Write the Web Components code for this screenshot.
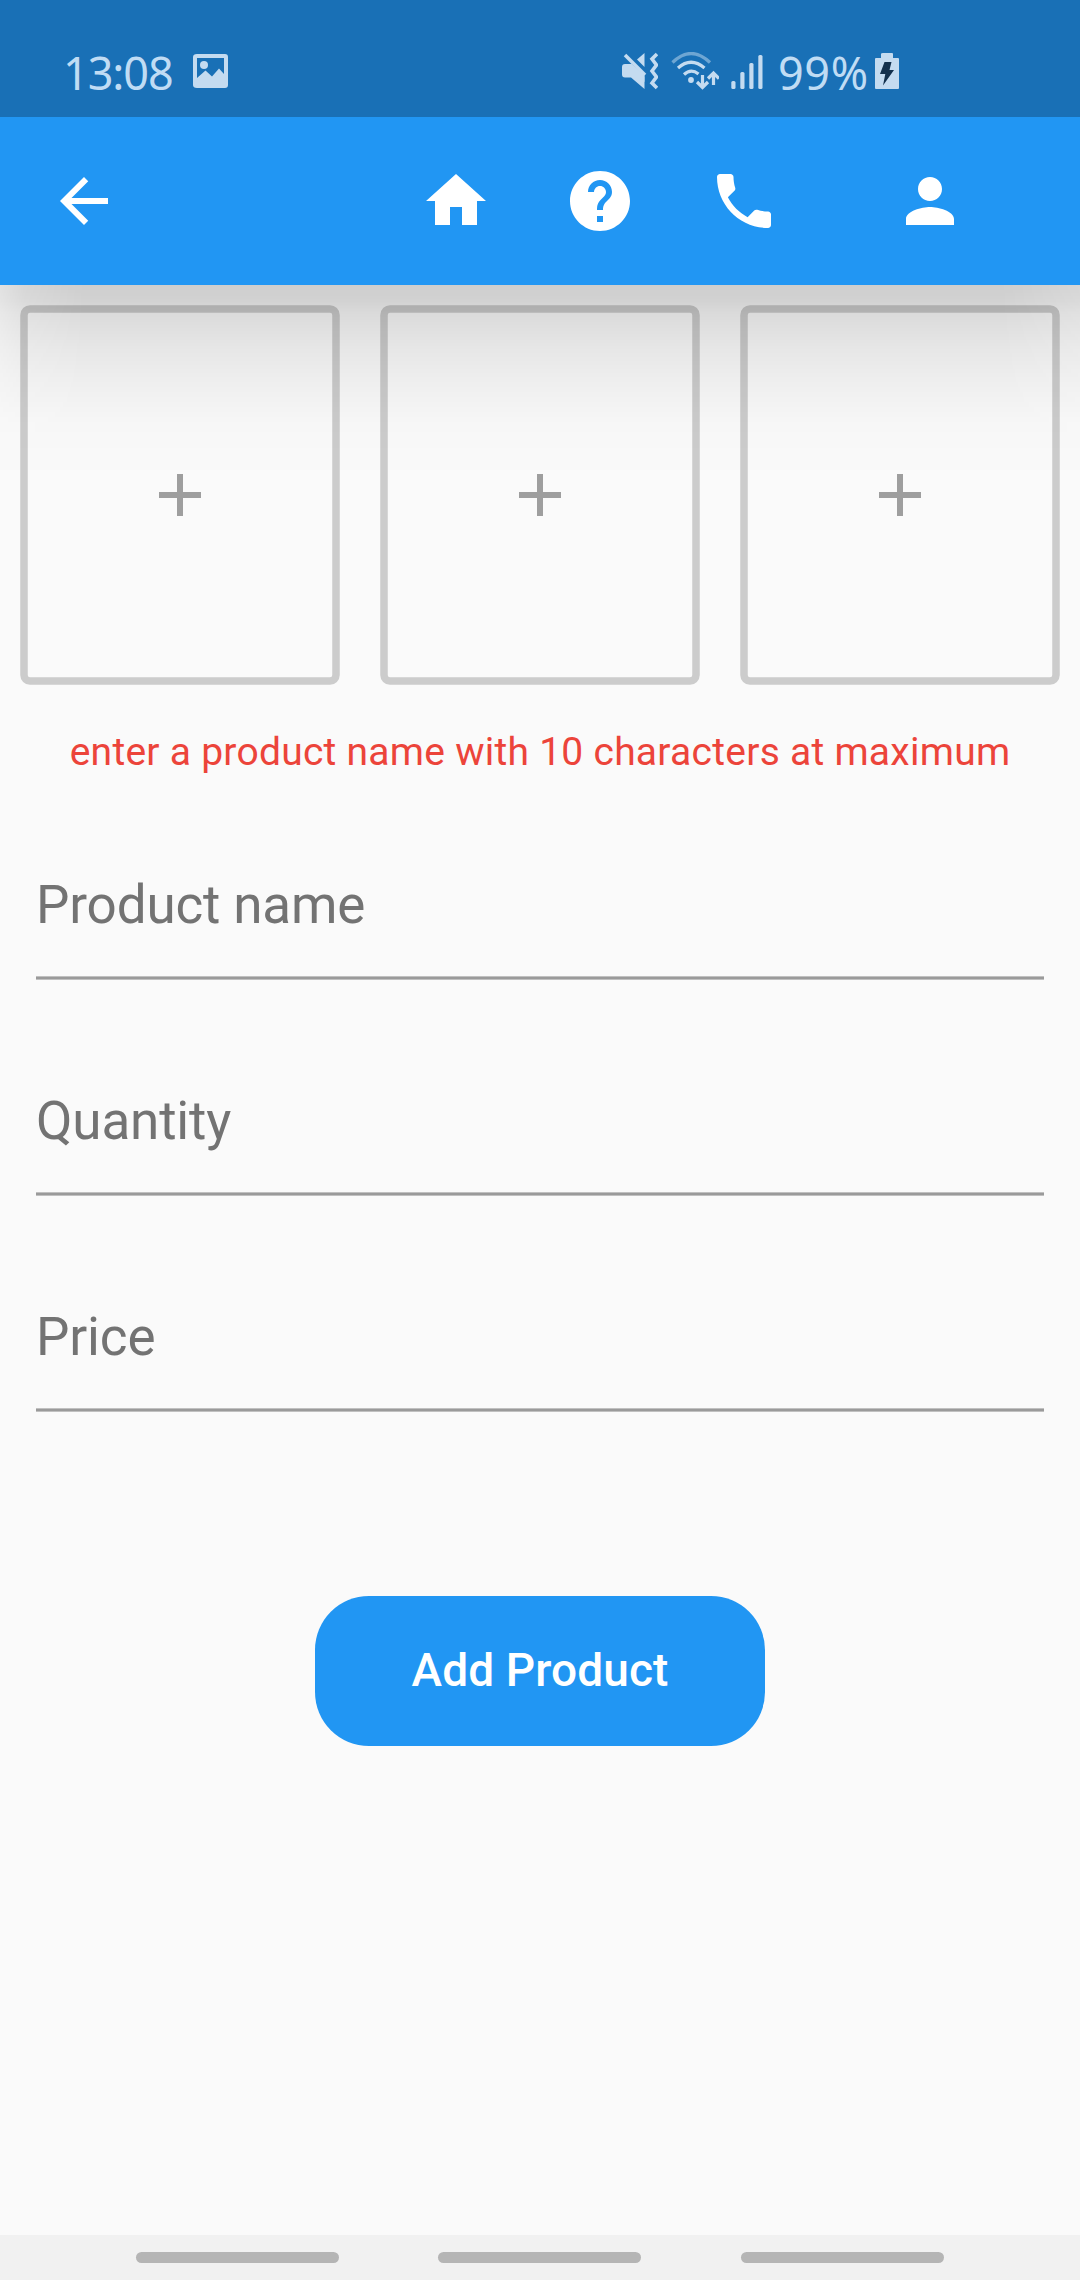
<!DOCTYPE html>
<html lang="en"><head><meta charset="utf-8"><title>Add Product</title>
<style>
html,body{margin:0;padding:0;background:#fafafa}
body{width:1080px;height:2280px;overflow:hidden;font-family:Roboto,"Liberation Sans",sans-serif}
</style></head><body>
<product-screen></product-screen>
<script>
const define=(name,html)=>customElements.define(name,class extends HTMLElement{
  constructor(){super();const t=document.createElement('template');t.innerHTML=html;
    this.attachShadow({mode:'open'}).appendChild(t.content.cloneNode(true));}
});

define('status-bar',`<style>
:host{display:flex;box-sizing:border-box;height:117px;padding:52px 181px 0 63px;background:#1970b6;color:#c0dcf4;font:400 45px/38px "Noto Sans","Open Sans",sans-serif;align-items:flex-start}
svg{display:block;flex:none}
span{padding-top:2px}
.time{width:130px;white-space:nowrap;letter-spacing:-1.1px}
.gap{flex:1}.wifi{margin-left:13px}.sig{margin-left:12px}
.pct{margin-left:15px;width:97px;white-space:nowrap;letter-spacing:.6px}
</style>
<span class="time">13:08</span>
<svg width="36" height="38" viewBox="0 0 36 38"><path fill="#c4dbf0" fill-rule="evenodd" d="M4 2h28q3 0 3 3v28q0 3-3 3H4q-4 0-4-3V5q0-3 4-3zM4 6v20l8.500-7.500 6.500 6 7-8 5 5.500V6z"/><circle cx="11" cy="13" r="4" fill="#c4dbf0"/></svg>
<span class="gap"></span>
<svg width="36" height="38" viewBox="0 0 36 38"><g fill="#c4dbf0"><path d="M0 15q0-3 3-3h6.500L22.500 23V37L9 25.500H3q-3 0-3-3z"/><path d="M9 12L22.500 24.500V30L7 15z"/><path d="M22.500 1v14L15 7.500z"/></g><path d="M3 3l20 20" stroke="#c4dbf0" stroke-width="3.600"/><path d="M35 2l-5 5 4.500 6-4.500 6 4.500 6-4.500 6 5 5" fill="none" stroke="#c4dbf0" stroke-width="3.600"/></svg>
<svg class="wifi" width="48" height="38" viewBox="0 0 48 38"><g fill="none" stroke="#c4dbf0" stroke-width="3.200"><path d="M1.500 10.500Q20-7.500 39 10.500" stroke-opacity=".5"/><path d="M7 16Q20 4.500 33.500 16"/><path d="M13 22.500Q20 16 27.500 22"/><path d="M31.500 23v11M26 30l5.500 5.500L37 30M42.500 33V22M37 26.500l5.500-5.500 5.500 5.500"/></g><circle cx="20" cy="28" r="2.900" fill="#c4dbf0"/></svg>
<svg class="sig" width="32" height="38" viewBox="0 0 32 38"><g fill="#c4dbf0"><rect x=".3" y="29" width="4.200" height="8" rx="1.500"/><rect x="9.300" y="20" width="4.200" height="17" rx="1.500"/><rect x="18.300" y="11" width="4.200" height="26" rx="1.500"/><rect x="27.300" y="3" width="4.200" height="34" rx="1.500"/></g></svg>
<span class="pct">99%</span>
<svg width="24" height="38" viewBox="0 0 24 38"><path fill="#c4dbf0" d="M8 1h9q1 0 1 1v4h5q1 0 1 1v29q0 1-1 1H1q-1 0-1-1V7q0-1 1-1h5V2q0-1 2-1z"/><path fill="#12304d" d="M9.500 10h7l-2 8H19L8 33.500l2.300-11.500H5z"/></svg>`);

define('nav-icon',`<style>:host{display:block;width:72px;height:72px}svg{display:block;width:100%;height:100%;fill:currentColor}</style><svg viewBox="0 0 24 24"><path/></svg>`);
const ICONS={
  back:'M20 11H7.830l5.590-5.590L12 4l-8 8 8 8 1.410-1.410L7.830 13H20v-2z',
  home:'M10 20v-6h4v6h5v-8h3L12 3 2 12h3v8z',
  help:'M12 2C6.480 2 2 6.480 2 12s4.480 10 10 10 10-4.480 10-10S17.520 2 12 2zm1 17h-2v-2h2v2zm2.070-7.750l-.9.920C13.450 12.900 13 13.500 13 15h-2v-.5c0-1.100.45-2.100 1.170-2.830l1.240-1.260c.37-.36.59-.86.59-1.410 0-1.100-.9-2-2-2s-2 .9-2 2H8c0-2.210 1.790-4 4-4s4 1.790 4 4c0 .88-.36 1.680-.93 2.250z',
  call:'M6.620 10.790c1.440 2.830 3.760 5.140 6.590 6.590l2.200-2.200c.27-.27.67-.36 1.020-.24 1.120.37 2.330.57 3.570.57.55 0 1 .45 1 1V20c0 .55-.45 1-1 1-9.390 0-17-7.610-17-17 0-.55.45-1 1-1h3.500c.55 0 1 .45 1 1 0 1.250.2 2.450.57 3.570.11.35.03.74-.25 1.020l-2.200 2.200z',
  person:'M12 12c2.210 0 4-1.790 4-4s-1.790-4-4-4-4 1.790-4 4 1.790 4 4 4zm0 2c-2.670 0-8 1.340-8 4v2h16v-2c0-2.660-5.330-4-8-4z',
  add:'M19 13h-6v6h-2v-6H5v-2h6V5h2v6h6v2z'
};
const paintIcons=root=>root.querySelectorAll('nav-icon').forEach(i=>i.shadowRoot.querySelector('path').setAttribute('d',ICONS[i.getAttribute('name')]));

define('app-bar',`<style>
:host{display:flex;position:relative;z-index:1;box-sizing:border-box;height:168px;align-items:center;padding:0 114px 0 48px;background:#2196f3;color:#fff}
.actions{display:flex;margin-left:auto;gap:72px}
.last{margin-left:42px}
.shadow{position:absolute;left:0;right:0;top:100%;height:200px;pointer-events:none;
background:linear-gradient(rgba(0,0,0,.175),rgba(0,0,0,.155) 8%,rgba(0,0,0,.125) 14%,rgba(0,0,0,.1) 22%,rgba(0,0,0,.075) 33%,rgba(0,0,0,.051) 45%,rgba(0,0,0,.03) 57%,rgba(0,0,0,.013) 70%,rgba(0,0,0,.005) 85%,transparent);
-webkit-mask-image:linear-gradient(90deg,rgba(0,0,0,.55),rgba(0,0,0,.8) 25px,#000 85px,#000 1000px,rgba(0,0,0,.8));mask-image:linear-gradient(90deg,rgba(0,0,0,.55),rgba(0,0,0,.8) 25px,#000 85px,#000 1000px,rgba(0,0,0,.8))}
</style><nav-icon name="back"></nav-icon><div class="actions"><nav-icon name="home"></nav-icon><nav-icon name="help"></nav-icon><nav-icon name="call"></nav-icon><nav-icon class="last" name="person"></nav-icon></div><div class="shadow"></div>`);

define('photo-slot',`<style>
:host{display:grid;width:320px;height:380px;color:#9e9e9e;place-items:center}
svg,nav-icon{grid-area:1/1}
nav-icon{width:72px;height:72px}
</style><svg width="320" height="380"><rect x="4" y="4" width="312" height="372" rx="6" fill="none" stroke="#ccc" stroke-width="7.500"/></svg><nav-icon name="add"></nav-icon>`);

define('text-field',`<style>
:host{display:flex;flex-direction:column;justify-content:space-between;box-sizing:border-box;height:140px;padding-top:33px;color:#737373;font-size:53px;letter-spacing:-.15px;line-height:64px;white-space:nowrap}
.line{height:4px;background:linear-gradient(#c0c0c0 25%,#9a9a9a 25% 75%,#c0c0c0 75%)}
</style><slot></slot><div class="line"></div>`);

define('primary-button',`<style>
:host{display:flex;align-items:center;justify-content:center;box-sizing:border-box;width:450px;height:150px;padding-bottom:3px;border-radius:54px;background:#2196f3;color:#fff;font-size:46px;letter-spacing:.1px;font-weight:500;line-height:56px;white-space:nowrap}
</style><slot></slot>`);

define('system-nav',`<style>
:host{display:flex;box-sizing:border-box;height:45px;background:#f1f1f1;padding:16.700px 136px 0}
i{width:203px;height:11px;border-radius:6px;background:#b5b5b5}
i+i{margin-left:99px}i+i+i{margin-left:100px}
</style><i></i><i></i><i></i>`);

define('product-screen',`<style>
:host{display:flex;flex-direction:column;width:1080px;height:2280px;background:#fafafa}
main{flex:1;display:flex;flex-direction:column}
.photos{display:flex;justify-content:space-between;padding:20px 20px 0}
.error{margin:44px 0 0;text-align:center;color:#ec443a;font-size:39px;letter-spacing:.26px;line-height:46px;white-space:nowrap}
.fields{display:flex;flex-direction:column;gap:76px;padding:65px 36px 0}
primary-button{align-self:center;margin-top:184px}
</style>
<status-bar></status-bar><app-bar></app-bar>
<main><div class="photos"><photo-slot></photo-slot><photo-slot></photo-slot><photo-slot></photo-slot></div>
<p class="error">enter a product name with 10 characters at maximum</p>
<div class="fields"><text-field><span>Product name</span></text-field><text-field><span>Quantity</span></text-field><text-field><span>Price</span></text-field></div>
<primary-button>Add Product</primary-button></main>
<system-nav></system-nav>`);

const screenRoot=document.querySelector('product-screen').shadowRoot;
paintIcons(screenRoot.querySelector('app-bar').shadowRoot);
screenRoot.querySelectorAll('photo-slot').forEach(p=>paintIcons(p.shadowRoot));
</script></body></html>
